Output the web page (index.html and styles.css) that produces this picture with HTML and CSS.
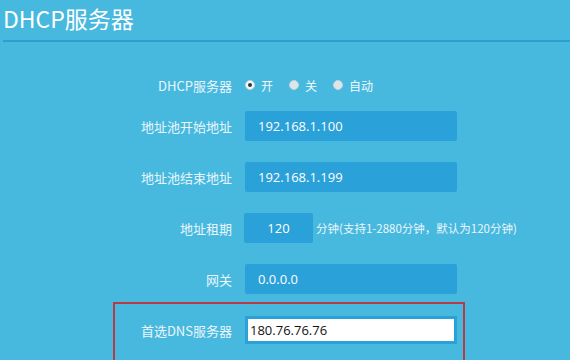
FILE: index.html
```html
<!DOCTYPE html>
<html>
<head>
<meta charset="utf-8">
<link rel="stylesheet" href="styles.css">
</head>
<body>
<div class="page">
  <div class="header"><h1 class="title">DHCP服务器</h1></div>
  <div class="form">
    <div class="row row-radio">
      <div class="label">DHCP服务器</div>
      <div class="radios">
        <span class="radio-item"><span class="radio checked"></span>开</span>
        <span class="radio-item"><span class="radio"></span>关</span>
        <span class="radio-item"><span class="radio"></span>自动</span>
      </div>
    </div>
    <div class="row row-first">
      <div class="label">地址池开始地址</div>
      <div class="input">192.168.1.100</div>
    </div>
    <div class="row">
      <div class="label">地址池结束地址</div>
      <div class="input">192.168.1.199</div>
    </div>
    <div class="row">
      <div class="label">地址租期</div>
      <div class="input short">120</div>
      <div class="hint">分钟(支持1-2880分钟，默认为120分钟)</div>
    </div>
    <div class="row">
      <div class="label">网关</div>
      <div class="input">0.0.0.0</div>
    </div>
    <div class="highlight">
      <div class="row row-dns">
        <div class="label">首选DNS服务器</div>
        <div class="input focus">180.76.76.76</div>
      </div>
    </div>
  </div>
</div>
</body>
</html>
```
FILE: styles.css
```css
html, body {
  margin: 0;
  padding: 0;
}
body {
  background: #47b9df;
  width: 570px;
  height: 360px;
  overflow: hidden;
  font-family: "Noto Sans CJK SC", "Noto Sans", sans-serif;
  color: #f2fafd;
}
.page {
  padding-left: 3px;
}
.header {
  border-bottom: 2px solid #2c9fd1;
  box-sizing: border-box;
  height: 42px;
}
.title {
  margin: 0;
  font-weight: normal;
  font-size: 23px;
  line-height: 36px;
  color: #ffffff;
}
.form {
  display: flex;
  flex-direction: column;
  margin-left: -3px;
}
.row {
  display: flex;
  align-items: center;
  gap: 13px;
  height: 30px;
  margin-top: 21px;
}
.row-radio {
  height: 20px;
  margin-top: 33px;
}
.row-first {
  margin-top: 16px;
}
.label {
  width: 232px;
  text-align: right;
  font-size: 13px;
  color: #eaf6fb;
  flex: none;
}
.radios {
  display: flex;
  gap: 16px;
  font-size: 12px;
}
.radio-item {
  display: flex;
  align-items: center;
  gap: 6px;
}
.radio {
  width: 8px;
  height: 8px;
  border-radius: 50%;
  background: #dbe6ea;
  border: 1px solid #c5d3d8;
  position: relative;
}
.radio.checked {
  background: #f4f6f7;
}
.radio.checked::after {
  content: "";
  position: absolute;
  left: 2px;
  top: 2px;
  width: 4px;
  height: 4px;
  border-radius: 50%;
  background: #2b3a44;
}
.input {
  width: 212px;
  height: 30px;
  box-sizing: border-box;
  background: #2aa1d8;
  border-radius: 2px;
  padding-left: 13px;
  font-family: "Open Sans", "Noto Sans", sans-serif;
  font-size: 13px;
  line-height: 30px;
  color: #ffffff;
}
.input.short {
  width: 69px;
  padding-left: 0;
  text-align: center;
  margin-left: -1px;
}
.hint {
  font-size: 11.5px;
  margin-left: -10px;
  color: #eaf6fb;
}
.highlight {
  margin-top: 8px;
  margin-left: 113px;
  width: 352px;
  height: 70px;
  box-sizing: border-box;
  border: 2px solid #b83a44;
  border-bottom: none;
}
.row-dns {
  margin-top: 12px;
  height: 28px;
}
.row-dns .label {
  width: 117px;
}
.input.focus {
  height: 28px;
  border: 3px solid #2aa1d8;
  background: #ffffff;
  color: #111111;
  padding-left: 2px;
  line-height: 22px;
  border-radius: 0;
}
```
